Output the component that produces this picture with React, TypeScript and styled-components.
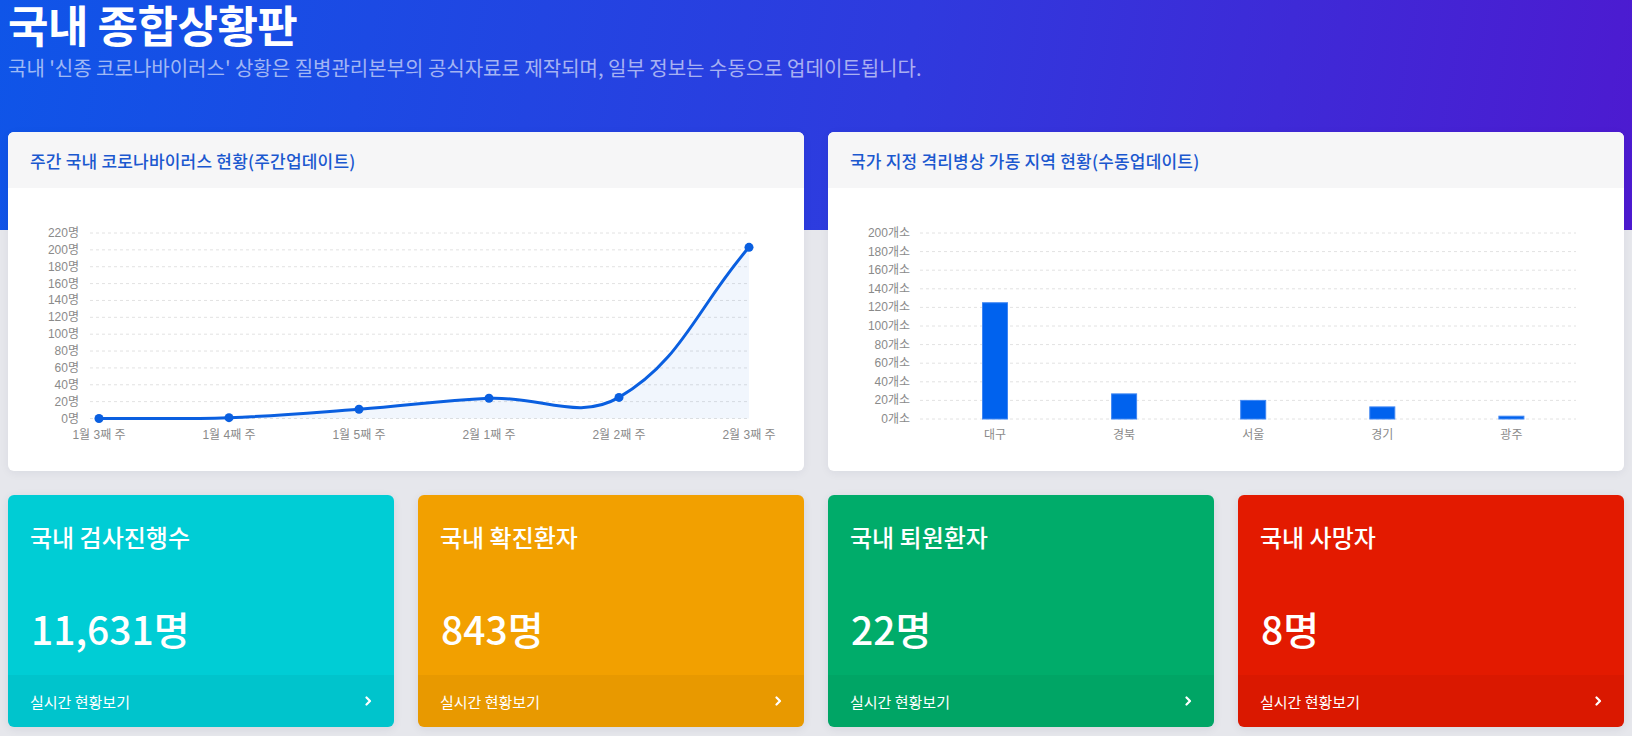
import React from "react";
import styled, { createGlobalStyle } from "styled-components";

const GlobalStyle = createGlobalStyle`
  body {
    margin: 0;
    background: #e6e7ec;
    font-family: "Noto Sans CJK KR", "Noto Sans", sans-serif;
  }
`;

const Page = styled.div`
  min-height: 736px;
  background: linear-gradient(100deg, #0f55e8 0%, #2f3ade 55%, #4d1ad0 100%) top / 100% 230px no-repeat,
    #e6e7ec;
  padding: 0 8px 8px;
  box-sizing: border-box;
`;

const Hero = styled.header`
  padding: 0 0 50px;
  color: #fff;
`;

const Title = styled.h1`
  margin: 0;
  font-size: 44px;
  line-height: 48px;
  font-weight: 700;
  letter-spacing: -0.5px;
`;

const Subtitle = styled.p`
  margin: 6px 0 0;
  font-size: 20px;
  line-height: 28px;
  font-weight: 400;
  color: rgba(255, 255, 255, 0.6);
`;

const ChartRow = styled.section`
  display: grid;
  grid-template-columns: 1fr 1fr;
  gap: 24px;
`;

const ChartCard = styled.div`
  background: #fff;
  border-radius: 6px;
  overflow: hidden;
  box-shadow: 0 2px 10px rgba(20, 30, 60, 0.06);
`;

const ChartHeader = styled.div`
  height: 56px;
  display: flex;
  align-items: center;
  padding: 0 22px;
  background: #f6f6f7;
  color: #1b58cf;
  font-size: 17px;
  font-weight: 500;
  letter-spacing: 0.2px;
`;

const ChartBody = styled.div`
  height: 283px;
  svg {
    display: block;
    width: 100%;
    height: 100%;
  }
  text {
    font-family: "Liberation Sans", "Noto Sans CJK KR", sans-serif;
    font-size: 12px;
    fill: #8a8a8a;
  }
`;

const StatRow = styled.section`
  display: grid;
  grid-template-columns: repeat(4, 1fr);
  gap: 24px;
  margin-top: 24px;
`;

const StatCard = styled.div<{ $bg: string }>`
  height: 232px;
  display: flex;
  flex-direction: column;
  background: ${(p) => p.$bg};
  border-radius: 6px;
  overflow: hidden;
  color: #fff;
  box-shadow: 0 2px 10px rgba(20, 30, 60, 0.08);
`;

const StatTitle = styled.div`
  padding: 26px 22px 0;
  font-size: 24px;
  line-height: 32px;
  font-weight: 500;
`;

const StatValue = styled.div`
  padding: 51px 22px 0 23px;
  font-size: 39px;
  line-height: 48px;
  font-weight: 500;
`;

const StatFooter = styled.a`
  margin-top: auto;
  height: 52px;
  display: flex;
  align-items: center;
  justify-content: space-between;
  padding: 0 22px;
  background: rgba(0, 0, 0, 0.04);
  color: #fff;
  font-size: 15px;
  text-decoration: none;
  svg {
    width: 7px;
    height: 10px;
  }
`;

type Pt = { x: number; y: number };

// chart.js style spline (tension 0.4)
function splinePath(pts: Pt[], t = 0.4) {
  const cps = pts.map((cur, i) => {
    const prev = pts[i - 1] || cur;
    const next = pts[i + 1] || cur;
    const d01 = Math.hypot(cur.x - prev.x, cur.y - prev.y);
    const d12 = Math.hypot(next.x - cur.x, next.y - cur.y);
    const sum = d01 + d12 || 1;
    const fa = (t * d01) / sum;
    const fb = (t * d12) / sum;
    return {
      prev: { x: cur.x - fa * (next.x - prev.x), y: cur.y - fa * (next.y - prev.y) },
      next: { x: cur.x + fb * (next.x - prev.x), y: cur.y + fb * (next.y - prev.y) },
    };
  });
  let d = `M${pts[0].x},${pts[0].y}`;
  for (let i = 1; i < pts.length; i++) {
    const a = cps[i - 1].next;
    const b = cps[i].prev;
    d += ` C${a.x},${a.y} ${b.x},${b.y} ${pts[i].x},${pts[i].y}`;
  }
  return d;
}

const weekly = [
  { label: "1월 3째 주", value: 0 },
  { label: "1월 4째 주", value: 1 },
  { label: "1월 5째 주", value: 11 },
  { label: "2월 1째 주", value: 24 },
  { label: "2월 2째 주", value: 25 },
  { label: "2월 3째 주", value: 203 },
];

const beds = [
  { label: "대구", value: 125 },
  { label: "경북", value: 27 },
  { label: "서울", value: 20 },
  { label: "경기", value: 13 },
  { label: "광주", value: 3 },
];

function LineChart() {
  const zero = 230.5;
  const k = 185.5 / 220;
  const ticks = Array.from({ length: 12 }, (_, i) => i * 20);
  const pts = weekly.map((w, i) => ({ x: 91 + i * 130, y: zero - w.value * k }));
  const line = splinePath(pts);
  const area = `${line} L${pts[pts.length - 1].x},${zero} L${pts[0].x},${zero} Z`;
  return (
    <svg viewBox="0 0 796 283">
      {ticks.map((v) => (
        <g key={v}>
          <line x1={82} x2={740} y1={zero - v * k} y2={zero - v * k} stroke="#e2e2e2" strokeDasharray="3 3" />
          <text x={71} y={zero - v * k + 4} textAnchor="end">
            {v}명
          </text>
        </g>
      ))}
      <path d={area} fill="rgba(10, 95, 224, 0.06)" />
      <path d={line} fill="none" stroke="#0a5fe0" strokeWidth={3} />
      {pts.map((p, i) => (
        <g key={i}>
          <circle cx={p.x} cy={p.y} r={4.5} fill="#0a5fe0" />
          <text x={p.x} y={251} textAnchor="middle">
            {weekly[i].label}
          </text>
        </g>
      ))}
    </svg>
  );
}

function BarChart() {
  const zero = 231;
  const k = 186 / 200;
  const ticks = Array.from({ length: 11 }, (_, i) => i * 20);
  return (
    <svg viewBox="0 0 796 283">
      {ticks.map((v) => (
        <g key={v}>
          <line x1={92} x2={748} y1={zero - v * k} y2={zero - v * k} stroke="#e2e2e2" strokeDasharray="3 3" />
          <text x={82} y={zero - v * k + 4} textAnchor="end">
            {v}개소
          </text>
        </g>
      ))}
      {beds.map((b, i) => {
        const cx = 167 + i * 129.1;
        const h = b.value * k;
        return (
          <g key={b.label}>
            <rect x={cx - 12.5} y={zero - h} width={25} height={h} fill="#0062ee" stroke="#3f86f3" strokeWidth={1} />
            <text x={cx} y={251} textAnchor="middle">
              {b.label}
            </text>
          </g>
        );
      })}
    </svg>
  );
}

const Chevron = () => (
  <svg viewBox="0 0 7 10">
    <path d="M1.5 1.5 L5 5 L1.5 8.5" fill="none" stroke="#fff" strokeWidth={2.2} strokeLinecap="round" strokeLinejoin="round" />
  </svg>
);

const stats = [
  { title: "국내 검사진행수", value: "11,631명", bg: "#00cdd5" },
  { title: "국내 확진환자", value: "843명", bg: "#f2a000" },
  { title: "국내 퇴원환자", value: "22명", bg: "#00ac6a" },
  { title: "국내 사망자", value: "8명", bg: "#e31a00" },
];

export default function App() {
  return (
    <>
      <GlobalStyle />
      <Page>
        <Hero>
          <Title>국내 종합상황판</Title>
          <Subtitle>
            국내 '신종 코로나바이러스' 상황은 질병관리본부의 공식자료로 제작되며, 일부 정보는 수동으로 업데이트됩니다.
          </Subtitle>
        </Hero>
        <ChartRow>
          <ChartCard>
            <ChartHeader>주간 국내 코로나바이러스 현황(주간업데이트)</ChartHeader>
            <ChartBody>
              <LineChart />
            </ChartBody>
          </ChartCard>
          <ChartCard>
            <ChartHeader>국가 지정 격리병상 가동 지역 현황(수동업데이트)</ChartHeader>
            <ChartBody>
              <BarChart />
            </ChartBody>
          </ChartCard>
        </ChartRow>
        <StatRow>
          {stats.map((s) => (
            <StatCard key={s.title} $bg={s.bg}>
              <StatTitle>{s.title}</StatTitle>
              <StatValue>{s.value}</StatValue>
              <StatFooter href="#">
                실시간 현황보기
                <Chevron />
              </StatFooter>
            </StatCard>
          ))}
        </StatRow>
      </Page>
    </>
  );
}
